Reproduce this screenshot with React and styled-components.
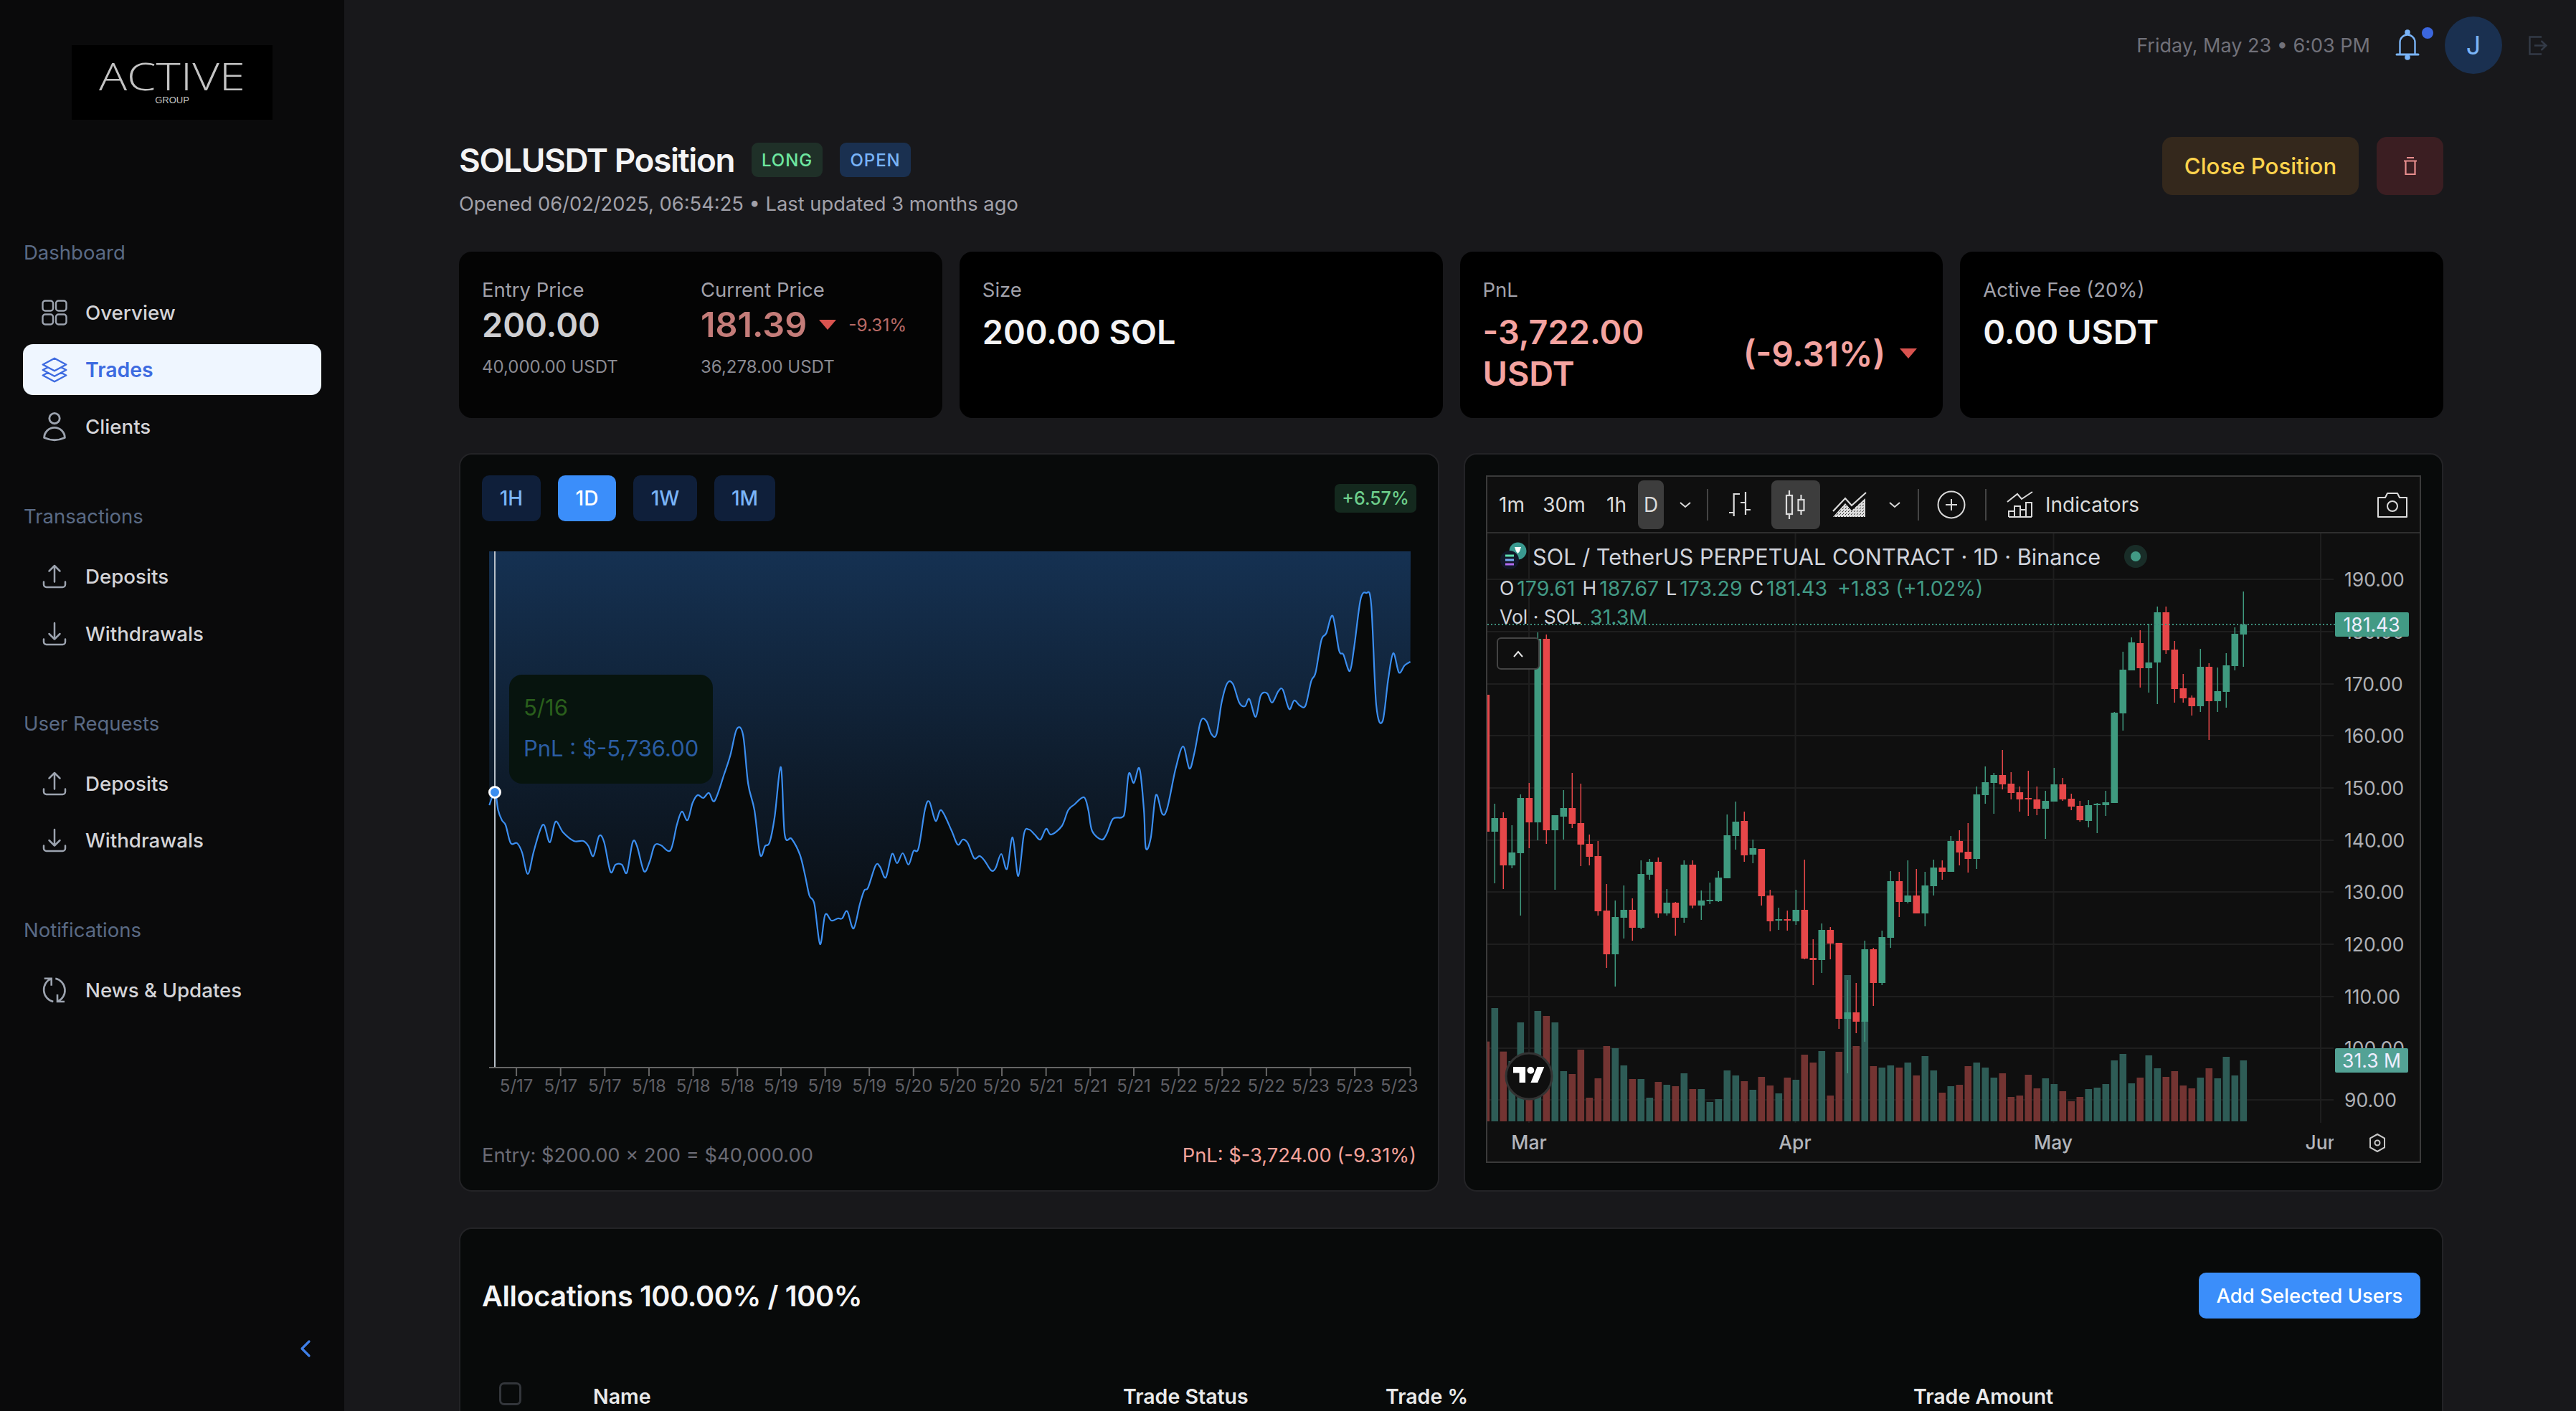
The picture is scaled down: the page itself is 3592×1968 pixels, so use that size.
import React from "react";
import styled, { createGlobalStyle } from "styled-components";
import {
  HiOutlineSquare3Stack3D,
  HiOutlineUser,
  HiOutlineArrowUpTray,
  HiOutlineArrowDownTray,
  HiOutlineChevronLeft,
} from "react-icons/hi2";

const GlobalStyle = createGlobalStyle`
  html, body {
    margin: 0;
    padding: 0;
    width: 3592px;
    height: 1968px;
    overflow: hidden;
    background: #18181b;
    font-family: Inter, "Noto Sans", sans-serif;
  }
`;

const Shell = styled.div`
  display: flex;
  width: 3592px;
  height: 1968px;
  overflow: hidden;
`;

const Sidebar = styled.aside`
  width: 480px;
  flex: none;
  height: 100%;
  background: #0a0a0b;
  display: flex;
  flex-direction: column;
`;

const Logo = styled.div`
  width: 280px;
  height: 104px;
  margin: 63px 0 165px 100px;
  background: #000;
  color: #c4c4c4;
  display: flex;
  flex-direction: column;
  align-items: center;
  font-family: "Liberation Sans", sans-serif;
  font-weight: 400;
`;

const LogoMain = styled.span`
  font-size: 53px;
  line-height: 38px;
  margin-top: 24px;
  font-family: "Open Sans", sans-serif;
  font-weight: 300;
  transform: scaleX(1.23);
`;

const LogoSub = styled.span`
  font-size: 13px;
  line-height: 12px;
  margin-top: 9px;
`;

const NavSection = styled.div`
  display: flex;
  flex-direction: column;
  gap: 8.5px;
  margin-bottom: 69.5px;
`;

const SectionLabel = styled.div`
  color: #5a6a85;
  font-size: 27.5px;
  line-height: 40px;
  padding-left: 33px;
  margin-bottom: 20px;
`;

const NavItem = styled.div`
  width: 416px;
  height: 71px;
  margin-left: 32px;
  padding-left: 26px;
  box-sizing: border-box;
  display: flex;
  align-items: center;
  gap: 26px;
  border-radius: 14px;
  font-size: ${(p) => (p.$active ? 28.4 : 27.7)}px;
  font-weight: ${(p) => (p.$active ? 600 : 500)};
  background: ${(p) => (p.$active ? "#eff6ff" : "transparent")};
  color: ${(p) => (p.$active ? "#3e6be0" : "#d4d4d8")};
`;

const NavIcon = styled.span`
  width: 35px;
  height: 40px;
  display: flex;
  align-items: center;
  justify-content: center;
  color: ${(p) => (p.$active ? "#3e6be0" : "#9ca3af")};
  svg {
    flex: none;
  }
`;

const CollapseButton = styled.div`
  margin-top: auto;
  margin-bottom: 71px;
  align-self: flex-end;
  margin-right: 38px;
  color: #3f7fe8;
  display: flex;
`;

const Main = styled.main`
  flex: 1;
  min-width: 0;
  display: flex;
  flex-direction: column;
`;

const Topbar = styled.header`
  height: 126px;
  flex: none;
  padding-right: 40px;
  display: flex;
  align-items: center;
  justify-content: flex-end;
`;

const DateText = styled.span`
  color: #71717a;
  font-size: 27px;
  margin-right: 34px;
`;

const BellWrap = styled.div`
  position: relative;
  width: 36px;
  height: 44px;
  margin-right: 34px;
  color: #7ab4f8;
  svg {
    display: block;
  }
`;

const BellDot = styled.span`
  position: absolute;
  top: -3px;
  right: -18px;
  width: 16px;
  height: 16px;
  border-radius: 50%;
  background: #3b66dd;
`;

const Avatar = styled.div`
  width: 80px;
  height: 80px;
  border-radius: 50%;
  background: #1a3050;
  color: #7ab4f8;
  font-size: 36px;
  display: flex;
  align-items: center;
  justify-content: center;
`;

const LogoutIcon = styled.div`
  color: #333a47;
  margin-left: 37px;
  display: flex;
`;

const Content = styled.div`
  padding: 65px 185px 0 160px;
`;

const PageHeader = styled.div`
  display: flex;
  justify-content: space-between;
  height: 114px;
  margin-bottom: 46px;
`;

const TitleRow = styled.div`
  display: flex;
  align-items: center;
  height: 64px;
  gap: 24px;
`;

const Title = styled.h1`
  margin: 0;
  color: #f4f4f5;
  font-size: 45.8px;
  font-weight: 600;
  letter-spacing: -0.03em;
`;

const Tag = styled.span`
  height: 48px;
  width: 99px;
  border-radius: 9px;
  display: flex;
  align-items: center;
  justify-content: center;
  font-size: 24px;
  font-weight: 500;
  letter-spacing: 0.04em;
  background: ${(p) => p.$bg};
  color: ${(p) => p.$fg};
`;

const Subtitle = styled.div`
  margin: 10px 0 0;
  color: #a1a1aa;
  font-size: 27.3px;
  line-height: 40px;
`;

const HeaderActions = styled.div`
  display: flex;
  gap: 25px;
  height: 81px;
`;

const ActionButton = styled.button`
  border: 0;
  height: 81px;
  border-radius: 14px;
  font-family: inherit;
  font-size: 31.2px;
  font-weight: 500;
  width: ${(p) => p.$w}px;
  background: ${(p) => p.$bg};
  color: ${(p) => p.$fg};
  display: flex;
  align-items: center;
  justify-content: center;
`;

const StatGrid = styled.div`
  display: grid;
  grid-template-columns: repeat(4, 1fr);
  gap: 24px;
  height: 232px;
  margin-bottom: 49px;
`;

const StatCard = styled.div`
  background: ${(p) => p.$bg || "#000"};
  border-radius: 18px;
  padding: 33px 32px;
  box-sizing: border-box;
`;

const StatSplit = styled.div`
  display: grid;
  grid-template-columns: 305px 1fr;
`;

const StatLabel = styled.div`
  color: #a1a1aa;
  font-size: 27.5px;
  line-height: 40px;
`;

const StatValue = styled.div`
  font-size: ${(p) => p.$size || 46.8}px;
  font-weight: 600;
  line-height: ${(p) => p.$line || 58}px;
  margin-top: ${(p) => p.$top || 0}px;
  color: ${(p) => p.$color || "#f4f4f5"};
`;

const StatSub = styled.div`
  color: #8a8a92;
  font-size: 24px;
  line-height: 36px;
  margin-top: 12px;
`;

const PriceRow = styled.div`
  display: flex;
  align-items: center;
  gap: 17px;
`;

const Triangle = styled.span`
  width: 0;
  height: 0;
  border-left: ${(p) => p.$w}px solid transparent;
  border-right: ${(p) => p.$w}px solid transparent;
  border-top: ${(p) => p.$h}px solid #d9534f;
`;

const SmallDelta = styled.span`
  color: #b86a66;
  font-size: 24.4px;
`;

const PnlRow = styled.div`
  display: flex;
  justify-content: space-between;
  align-items: center;
`;

const PnlDelta = styled.div`
  display: flex;
  align-items: center;
  gap: 20px;
  margin: 12px 4px 0 0;
  color: #f4a3a0;
  font-size: 47.5px;
  font-weight: 600;
`;

const ChartRow = styled.div`
  display: grid;
  grid-template-columns: 1367px 1366px;
  gap: 34px;
  height: 1030px;
  margin-bottom: 50px;
`;

const Panel = styled.section`
  background: #080a0a;
  border: 2px solid #232326;
  border-radius: 18px;
  box-sizing: border-box;
  position: relative;
`;

const RangeBar = styled.div`
  display: flex;
  align-items: center;
  gap: 24px;
  padding: 29px 30px 0;
`;

const RangeButton = styled.div`
  height: 64px;
  width: ${(p) => p.$w}px;
  border-radius: 10px;
  display: flex;
  align-items: center;
  justify-content: center;
  font-size: 28px;
  font-weight: 500;
  background: ${(p) => (p.$active ? "#3b8efa" : "#0f1f3a")};
  color: ${(p) => (p.$active ? "#fff" : "#7ab4f8")};
`;

const ChangeBadge = styled.span`
  margin-left: auto;
  height: 40px;
  width: 114px;
  border-radius: 7px;
  display: flex;
  align-items: center;
  justify-content: center;
  background: #14291e;
  color: #6ecf8c;
  font-size: 25px;
  font-weight: 500;
`;

const PlotWrap = styled.div`
  position: relative;
  height: 800px;
  margin-top: 13px;
  svg {
    display: block;
  }
`;

const ChartTip = styled.div`
  position: absolute;
  left: 68px;
  top: 201px;
  width: 284px;
  height: 152px;
  border-radius: 18px;
  background: #07140e;
  box-sizing: border-box;
  padding: 17px 20px;
  font-size: 31px;
  line-height: 57px;
`;

const TipDate = styled.div`
  color: #2a5f1c;
`;

const TipValue = styled.div`
  color: #2b5da3;
  white-space: nowrap;
`;

const PanelFooter = styled.div`
  display: flex;
  justify-content: space-between;
  padding: 0 30px;
  margin-top: 52px;
  font-size: 27.3px;
  line-height: 40px;
  color: ${(p) => p.$color};
`;

const FooterRight = styled.span`
  color: #f4a29a;
`;

const TvFrame = styled.div`
  margin: 29px 29px 0;
  height: 959px;
  border: 2px solid #3a3a3a;
  box-sizing: border-box;
  background: #0f0f0f;
  display: flex;
  flex-direction: column;
`;

const TvToolbar = styled.div`
  height: 79px;
  flex: none;
  box-sizing: border-box;
  border-bottom: 2px solid #2e2e2e;
  display: flex;
  align-items: center;
  padding: 0 17px 0 4px;
  color: #dbdbdb;
  font-size: 28px;
`;

const TvButton = styled.div`
  width: ${(p) => p.$w}px;
  height: 68px;
  display: flex;
  align-items: center;
  justify-content: center;
  border-radius: 8px;
  flex: none;
  background: ${(p) => (p.$active ? "#3d3d3d" : "transparent")};
`;

const TvDivider = styled.span`
  width: 2px;
  height: 44px;
  flex: none;
  background: #444;
  margin-left: ${(p) => p.$left || 0}px;
`;

const TvIndicators = styled.div`
  display: flex;
  align-items: center;
  gap: 15px;
  margin-left: 27px;
`;

const TvCamera = styled.div`
  margin-left: auto;
  display: flex;
`;

const TvCanvas = styled.div`
  position: relative;
  flex: 1;
  min-height: 0;
  svg {
    display: block;
  }
`;

const TvLegend = styled.div`
  position: absolute;
  left: 17px;
  top: 10px;
  display: flex;
  flex-direction: column;
  color: #d1d4dc;
`;

const LegendTitle = styled.div`
  display: flex;
  align-items: center;
  gap: 8px;
  font-size: 30.7px;
  height: 44px;
`;

const LegendDot = styled.span`
  width: 32px;
  height: 32px;
  margin-left: 25px;
  border-radius: 50%;
  background: rgba(66, 154, 133, 0.22);
  display: flex;
  align-items: center;
  justify-content: center;
  &::after {
    content: "";
    width: 14px;
    height: 14px;
    border-radius: 50%;
    background: #429a85;
  }
`;

const LegendRow = styled.div`
  display: flex;
  align-items: center;
  font-size: 26.5px;
  height: 40px;
  margin-top: ${(p) => p.$top || 0}px;
  gap: ${(p) => p.$gap || 0}px;
`;

const LegendNum = styled.span`
  color: #429a85;
  font-size: 28.5px;
  margin: 0 10px 0 4px;
`;

const FoldButton = styled.div`
  position: absolute;
  left: 13px;
  top: 145px;
  width: 56px;
  height: 41px;
  border: 2px solid #444;
  border-radius: 6px;
  background: #0f0f0f;
  display: flex;
  align-items: center;
  justify-content: center;
`;

const TablePanel = styled(Panel)`
  height: 400px;
  padding: 61px 30px 0;
`;

const TableHead = styled.div`
  display: flex;
  justify-content: space-between;
  align-items: center;
  height: 64px;
`;

const TableTitle = styled.h2`
  margin: 2px 0 0;
  color: #f4f4f5;
  font-size: 39.7px;
  font-weight: 600;
  letter-spacing: -0.01em;
`;

const PrimaryButton = styled.button`
  border: 0;
  border-radius: 10px;
  height: 64px;
  width: 309px;
  background: #3b8efa;
  color: #fff;
  font-family: inherit;
  font-size: 27.5px;
  font-weight: 500;
`;

const TableColumns = styled.div`
  display: grid;
  grid-template-columns: 155px 739px 366px 736px 1fr;
  align-items: center;
  margin-top: 88px;
  height: 40px;
  color: #eaeaea;
  font-size: 28.5px;
  font-weight: 600;
`;

const Checkbox = styled.span`
  width: 31px;
  height: 32px;
  margin-left: 24px;
  box-sizing: border-box;
  border: 3px solid #33363b;
  border-radius: 7px;
  margin-top: -6px;
`;

const OverviewIcon = () => (
  <svg width="36" height="36" viewBox="0 0 36 36" fill="none" stroke="currentColor" strokeWidth="2.4">
    <rect x="1.5" y="1.5" width="14.5" height="14" rx="3.5" />
    <rect x="20" y="1.5" width="14.5" height="14" rx="3.5" />
    <rect x="1.5" y="20.5" width="14.5" height="14" rx="3.5" />
    <rect x="20" y="20.5" width="14.5" height="14" rx="3.5" />
  </svg>
);

const NewsIcon = () => (
  <svg width="40" height="40" viewBox="0 0 40 40" fill="none" stroke="currentColor" strokeWidth="2.6">
    <path d="M15.7 3.7A17 17 0 0 0 18.3 36M5.7 3.7h10v10" />
    <path d="M21.3 3.7A17 17 0 0 1 24 36M24 26v10h10" />
  </svg>
);

const BellIcon = () => (
  <svg width="36" height="44" viewBox="0 0 36 44" fill="none" stroke="currentColor" strokeWidth="2.4">
    <circle cx="18" cy="4" r="2.6" fill="currentColor" />
    <path d="M7.5 34V18a10.5 10.5 0 0 1 21 0v16" />
    <path d="M3 35h30" strokeLinecap="round" strokeWidth="3" />
    <circle cx="18" cy="39" r="2.6" fill="currentColor" />
  </svg>
);

const LogoutGlyph = () => (
  <svg width="26" height="27" viewBox="0 0 26 27" fill="none" stroke="currentColor" strokeWidth="2.4">
    <path d="M18 1.5H1.5v24H18" />
    <path d="M8 13.5h16M17.5 7l7 6.5-7 6.5" />
  </svg>
);

const TrashGlyph = () => (
  <svg width="24" height="28" viewBox="0 0 24 28" fill="none" stroke="#e88e8e" strokeWidth="2.2">
    <path d="M7 2h10M3 6.5h18M5.5 6.5V25h13V6.5" />
  </svg>
);

const LINE = [
  [48, 1123], [57, 1105], [62, 1130], [68, 1144], [74, 1151], [82, 1176], [92, 1176], [100, 1189], [109, 1219],
  [118, 1189], [128, 1159], [135, 1151], [144, 1175], [153, 1146], [165, 1161], [182, 1173], [197, 1173],
  [205, 1180], [213, 1194], [222, 1166], [230, 1175], [240, 1216], [248, 1206], [258, 1206], [266, 1217],
  [275, 1175], [282, 1180], [293, 1215], [302, 1202], [310, 1179], [320, 1179], [335, 1186], [345, 1151],
  [353, 1132], [362, 1144], [370, 1120], [378, 1109], [387, 1113], [396, 1106], [405, 1117], [420, 1080],
  [430, 1053], [440, 1017], [450, 1025], [458, 1093], [468, 1130], [477, 1192], [485, 1180], [492, 1175],
  [500, 1140], [510, 1070], [516, 1164], [527, 1170], [540, 1192], [548, 1220], [555, 1249], [563, 1261],
  [572, 1317], [580, 1276], [590, 1284], [600, 1281], [607, 1281], [615, 1271], [625, 1295], [635, 1261],
  [642, 1242], [648, 1238], [660, 1207], [667, 1209], [676, 1224], [686, 1191], [694, 1204], [703, 1190],
  [712, 1206], [720, 1187], [728, 1183], [738, 1130], [745, 1118], [755, 1145], [764, 1130], [780, 1158],
  [790, 1178], [798, 1171], [806, 1176], [816, 1197], [825, 1194], [833, 1201], [843, 1214], [850, 1211],
  [859, 1191], [868, 1212], [877, 1168], [886, 1222], [895, 1163], [903, 1157], [912, 1164], [921, 1171],
  [930, 1156], [938, 1164], [955, 1152], [965, 1130], [975, 1122], [990, 1112], [997, 1130], [1003, 1159],
  [1018, 1171], [1026, 1163], [1036, 1142], [1050, 1140], [1055, 1130], [1061, 1079], [1069, 1092],
  [1078, 1072], [1085, 1130], [1088, 1183], [1096, 1168], [1104, 1109], [1114, 1135], [1122, 1127],
  [1135, 1073], [1147, 1041], [1157, 1072], [1165, 1050], [1175, 1006], [1184, 1006], [1192, 1024],
  [1200, 1024], [1208, 980], [1217, 953], [1226, 954], [1236, 980], [1245, 985], [1252, 975], [1262, 1000],
  [1270, 970], [1280, 967], [1288, 980], [1298, 964], [1305, 962], [1315, 989], [1323, 977], [1332, 984],
  [1341, 984], [1350, 950], [1357, 938], [1366, 893], [1374, 883], [1384, 859], [1394, 907], [1401, 913],
  [1411, 936], [1418, 903], [1428, 837], [1437, 827], [1445, 843], [1453, 983], [1463, 1006], [1472, 947],
  [1480, 911], [1489, 938], [1498, 928], [1507, 923],
].map(([zx, y]) => [640 + zx / 1.136, y]);

// catmull-rom through the traced points, keeps the curve soft like the original
const smoothPath = (pts) => {
  let d = `M${pts[0][0]} ${pts[0][1]}`;
  for (let i = 0; i < pts.length - 1; i++) {
    const p0 = pts[i - 1] || pts[i];
    const p1 = pts[i];
    const p2 = pts[i + 1];
    const p3 = pts[i + 2] || p2;
    const c1x = p1[0] + (p2[0] - p0[0]) / 6;
    const c1y = p1[1] + (p2[1] - p0[1]) / 6;
    const c2x = p2[0] - (p3[0] - p1[0]) / 6;
    const c2y = p2[1] - (p3[1] - p1[1]) / 6;
    d += `C${c1x.toFixed(1)} ${c1y.toFixed(1)} ${c2x.toFixed(1)} ${c2y.toFixed(1)} ${p2[0].toFixed(1)} ${p2[1]}`;
  }
  return d;
};

const TICKS = [91, 161, 231, 301, 371, 441, 510, 580, 650, 720, 790, 860, 930, 1000, 1069, 1140, 1209, 1279, 1349, 1419, 1507];
const TICK_LABELS = ["5/17", "5/17", "5/17", "5/18", "5/18", "5/18", "5/19", "5/19", "5/19", "5/20", "5/20", "5/20", "5/21", "5/21", "5/21", "5/22", "5/22", "5/22", "5/23", "5/23", "5/23"];

const PnlChart = () => {
  const line = smoothPath(LINE);
  const area = `${line}L1967 769L682 769Z`;
  return (
    <svg width="1363" height="800" viewBox="642 740 1363 800">
      <defs>
        <linearGradient id="pnlFill" gradientUnits="userSpaceOnUse" x1="0" y1="769" x2="0" y2="1317">
          <stop offset="0" stopColor="#153152" />
          <stop offset="1" stopColor="#090c0f" />
        </linearGradient>
      </defs>
      <path d={area} fill="url(#pnlFill)" />
      <path d={line} fill="none" stroke="#3b8ef0" strokeWidth="2.2" />
      <line x1="690" y1="769" x2="690" y2="1489" stroke="#b8c0c8" strokeWidth="2" />
      <line x1="682" y1="1489" x2="1967" y2="1489" stroke="#666" strokeWidth="2" />
      {TICKS.map((t, i) => {
        const x = 640 + t / 1.136;
        const last = i === TICKS.length - 1;
        return (
          <g key={i}>
            <line x1={x} y1="1489" x2={x} y2="1501" stroke="#666" strokeWidth="2" />
            <text x={last ? x + 11 : x} y="1523" textAnchor={last ? "end" : "middle"} fontSize="24" fill="#5f5f65">
              {TICK_LABELS[i]}
            </text>
          </g>
        );
      })}
      <circle cx="690" cy="1105" r="7.5" fill="#3b8ef0" stroke="#fff" strokeWidth="3" />
    </svg>
  );
};

// colour, body top, body bottom, wick top, wick bottom, volume top (from the crop)
const CANDLES = [
  ["r", 969, 1160, 969, 1165, 968], ["g", 1141, 1160, 1121, 1232, 828], ["r", 1141, 1207, 1133, 1240, 1010],
  ["g", 1189, 1207, 1151, 1211, 1050], ["g", 1113, 1190, 1108, 1277, 888], ["r", 1113, 1147, 1092, 1183, 1150],
  ["g", 891, 1147, 882, 1172, 840], ["r", 891, 1158, 885, 1177, 861], ["g", 1137, 1158, 1137, 1241, 888],
  ["g", 1127, 1139, 1102, 1171, 1092], ["r", 1127, 1149, 1078, 1155, 1104], ["r", 1148, 1178, 1093, 1208, 1002],
  ["r", 1177, 1195, 1164, 1207, 1203], ["r", 1194, 1271, 1173, 1277, 1122], ["r", 1270, 1331, 1233, 1350, 987],
  ["g", 1279, 1331, 1256, 1376, 996], ["g", 1269, 1280, 1235, 1309, 1068], ["r", 1269, 1294, 1253, 1312, 1125],
  ["g", 1219, 1294, 1200, 1296, 1125], ["g", 1202, 1220, 1198, 1227, 1203], ["r", 1202, 1274, 1196, 1280, 1137],
  ["g", 1259, 1274, 1240, 1277, 1149], ["r", 1259, 1280, 1258, 1305, 1155], ["g", 1206, 1280, 1200, 1287, 1101],
  ["r", 1206, 1263, 1200, 1267, 1167], ["g", 1256, 1263, 1242, 1283, 1167], ["g", 1255, 1257, 1231, 1261, 1221],
  ["g", 1224, 1257, 1215, 1258, 1209], ["g", 1165, 1225, 1136, 1225, 1089], ["g", 1146, 1166, 1118, 1185, 1110],
  ["r", 1145, 1193, 1132, 1202, 1134], ["g", 1183, 1192, 1171, 1204, 1170], ["r", 1184, 1250, 1184, 1263, 1116],
  ["r", 1249, 1285, 1241, 1299, 1152], ["g", 1282, 1284, 1266, 1297, 1185], ["r", 1282, 1284, 1270, 1298, 1119],
  ["g", 1269, 1285, 1241, 1290, 1128], ["r", 1269, 1337, 1199, 1338, 1023], ["r", 1336, 1339, 1310, 1374, 1056],
  ["g", 1297, 1339, 1288, 1357, 1008], ["r", 1297, 1316, 1293, 1338, 1194], ["r", 1315, 1421, 1315, 1435, 1011],
  ["g", 1412, 1421, 1367, 1497, 690], ["r", 1412, 1425, 1371, 1441, 987], ["g", 1324, 1425, 1312, 1453, 880],
  ["r", 1324, 1371, 1322, 1403, 1071], ["g", 1307, 1371, 1298, 1374, 1077], ["g", 1229, 1308, 1215, 1322, 1068],
  ["r", 1229, 1258, 1216, 1279, 1077], ["g", 1249, 1258, 1200, 1260, 1056], ["r", 1249, 1274, 1212, 1274, 1110],
  ["g", 1235, 1274, 1216, 1292, 1029], ["g", 1210, 1236, 1199, 1249, 1089], ["r", 1210, 1216, 1200, 1227, 1182],
  ["g", 1173, 1216, 1166, 1216, 1155], ["r", 1173, 1189, 1158, 1207, 1149], ["r", 1188, 1198, 1148, 1217, 1071],
  ["g", 1108, 1198, 1097, 1212, 1056], ["g", 1091, 1109, 1069, 1121, 1077], ["g", 1081, 1092, 1078, 1135, 1119],
  ["r", 1081, 1094, 1046, 1101, 1101], ["r", 1093, 1106, 1077, 1115, 1200], ["r", 1105, 1115, 1097, 1132, 1194],
  ["r", 1113, 1115, 1075, 1138, 1107], ["r", 1115, 1128, 1097, 1137, 1164], ["g", 1117, 1128, 1103, 1170, 1122],
  ["g", 1094, 1118, 1071, 1118, 1146], ["r", 1094, 1115, 1085, 1117, 1176], ["r", 1114, 1125, 1107, 1130, 1218],
  ["r", 1124, 1144, 1117, 1146, 1200], ["g", 1123, 1145, 1116, 1154, 1167], ["g", 1121, 1123, 1120, 1162, 1161],
  ["g", 1119, 1123, 1103, 1138, 1146], ["g", 994, 1120, 993, 1120, 1047], ["g", 934, 995, 909, 1019, 1020],
  ["g", 896, 935, 889, 935, 1143], ["r", 897, 932, 879, 959, 1119], ["g", 924, 932, 870, 966, 1026],
  ["g", 854, 924, 846, 982, 1080], ["r", 854, 907, 846, 912, 1116], ["r", 906, 961, 894, 980, 1092],
  ["r", 960, 974, 940, 980, 1152], ["r", 973, 985, 970, 998, 1164], ["g", 930, 985, 905, 993, 1119],
  ["r", 930, 978, 925, 1032, 1080], ["g", 964, 978, 931, 993, 1122], ["g", 928, 965, 911, 987, 1032],
  ["g", 884, 929, 875, 935, 1110], ["g", 871, 885, 825, 930, 1047],
];

const GREEN = "#3f9a7f";
const RED = "#e64749";
const PRICES = [
  ["190.00", 808], ["170.00", 954], ["160.00", 1026], ["150.00", 1099], ["140.00", 1172],
  ["130.00", 1244], ["120.00", 1317], ["110.00", 1390], ["90.00", 1534],
];
const H_LINES = [808, 881, 954, 1026, 1099, 1172, 1244, 1317, 1390, 1462, 1534];
const V_LINES = [2132, 2503.5, 2863.5, 3236];
const MONTHS = [["Mar", 2132], ["Apr", 2503], ["May", 2863]];

const CandleChart = () => (
  <svg width="1299" height="876" viewBox="2074 744 1299 876" fontFamily="Inter, sans-serif">
    <defs>
      <clipPath id="plotClip">
        <rect x="2074" y="744" width="1180" height="876" />
      </clipPath>
    </defs>
    {H_LINES.map((y) => (
      <line key={y} x1="2074" x2="3254" y1={y} y2={y} stroke="#1e1e1e" strokeWidth="2" />
    ))}
    {V_LINES.map((x) => (
      <line key={x} x1={x} x2={x} y1="744" y2="1566" stroke="#1e1e1e" strokeWidth="2" />
    ))}
    <g clipPath="url(#plotClip)">
      {CANDLES.map((c, i) => {
        const x = 2072.3 + i * 12;
        const top = 1130 + c[5] / 3;
        return (
          <rect key={i} x={x - 4.8} y={top} width="9.6" height={1564 - top} fill={c[0] === "g" ? "#2e5c56" : "#733432"} />
        );
      })}
      {CANDLES.map((c, i) => {
        const x = 2072.3 + i * 12;
        const col = c[0] === "g" ? GREEN : RED;
        return (
          <g key={i}>
            <rect x={x - 0.75} y={c[3]} width="1.5" height={c[4] - c[3]} fill={col} />
            <rect x={x - 4.8} y={c[1]} width="9.6" height={Math.max(c[2] - c[1], 2)} fill={col} />
          </g>
        );
      })}
    </g>
    <line x1="2074" x2="3256" y1="871" y2="871" stroke="#3d8f7c" strokeWidth="2" strokeDasharray="2 3" />
    <circle cx="2132" cy="1501" r="32" fill="#0f0f0f" stroke="#333" strokeWidth="3" />
    <g transform="translate(2110 1488) scale(1.22)" fill="#fff">
      <path d="M14 22H7V11H0V4h14v18zM28 22h-8l7.5-18h8L28 22z" transform="translate(0 -4)" />
      <circle cx="20" cy="4" r="4" />
    </g>
    {PRICES.map(([label, y]) => (
      <text key={label} x="3269" y={y + 10} fontSize="26.5" fill="#aeb0b5">
        {label}
      </text>
    ))}
    <text x="3269" y="1472" fontSize="26.5" fill="#aeb0b5">
      100.00
    </text>
    <text x="3269" y="891" fontSize="26.5" fill="#aeb0b5">
      180.00
    </text>
    <rect x="3256" y="854" width="103" height="34" rx="2" fill="#429a85" />
    <text x="3307" y="881" fontSize="26.5" fill="#eef" textAnchor="middle">
      181.43
    </text>
    <rect x="3256" y="1462" width="102" height="34" rx="2" fill="#53a295" />
    <text x="3307" y="1489" fontSize="26.5" fill="#eef" textAnchor="middle">
      31.3 M
    </text>
    {MONTHS.map(([m, x]) => (
      <text key={m} x={x} y="1603" fontSize="26.5" fontWeight="500" fill="#b2b5bb" textAnchor="middle">
        {m}
      </text>
    ))}
    <svg x="3100" y="1570" width="154" height="50" viewBox="0 0 154 50">
      <text x="138" y="33" fontSize="26.5" fontWeight="500" fill="#b2b5bb" textAnchor="middle">
        Jun
      </text>
    </svg>
    <path d="M3315 1582l10 5.5v13l-10 5.5-10-5.5v-13z" fill="none" stroke="#c8c8c8" strokeWidth="2" />
    <circle cx="3315" cy="1594" r="3.5" fill="none" stroke="#c8c8c8" strokeWidth="2" />
  </svg>
);

const CaretDown = () => (
  <svg width="16" height="10" viewBox="0 0 16 10" fill="none" stroke="#dbdbdb" strokeWidth="2">
    <path d="M1 2l7 6 7-6" />
  </svg>
);

const SolIcon = () => (
  <svg width="38" height="44" viewBox="0 0 38 44" style={{ flex: "none" }}>
    <circle cx="25.5" cy="14.5" r="12" fill="#3a9a90" />
    <path d="M21 9h9l-2 6-2.5 3-2.5-3z" fill="#fff" />
    <circle cx="14" cy="27" r="13" fill="#12182a" />
    <rect x="8" y="19.5" width="12" height="3" fill="#5ee0b0" />
    <rect x="8" y="25.5" width="12" height="3" fill="#7aa8f0" />
    <rect x="8" y="31.5" width="12" height="3" fill="#b06af0" />
  </svg>
);

const NAV = [
  {
    title: "Dashboard",
    items: [
      { label: "Overview", icon: <OverviewIcon /> },
      { label: "Trades", icon: <HiOutlineSquare3Stack3D size={40} />, active: true },
      { label: "Clients", icon: <HiOutlineUser size={46} /> },
    ],
  },
  {
    title: "Transactions",
    items: [
      { label: "Deposits", icon: <HiOutlineArrowUpTray size={40} /> },
      { label: "Withdrawals", icon: <HiOutlineArrowDownTray size={40} /> },
    ],
  },
  {
    title: "User Requests",
    items: [
      { label: "Deposits", icon: <HiOutlineArrowUpTray size={40} /> },
      { label: "Withdrawals", icon: <HiOutlineArrowDownTray size={40} /> },
    ],
  },
  {
    title: "Notifications",
    items: [{ label: "News & Updates", icon: <NewsIcon /> }],
  },
];

const App = () => {
  return (
    <Shell>
      <GlobalStyle />
      <Sidebar>
        <Logo>
          <LogoMain>ACTIVE</LogoMain>
          <LogoSub>GROUP</LogoSub>
        </Logo>
        {NAV.map((section) => (
          <NavSection key={section.title}>
            <SectionLabel>{section.title}</SectionLabel>
            {section.items.map((item) => (
              <NavItem key={item.label} $active={item.active}>
                <NavIcon $active={item.active}>{item.icon}</NavIcon>
                {item.label}
              </NavItem>
            ))}
          </NavSection>
        ))}
        <CollapseButton>
          <HiOutlineChevronLeft size={32} strokeWidth={2.4} />
        </CollapseButton>
      </Sidebar>
      <Main>
        <Topbar>
          <DateText>Friday, May 23 • 6:03 PM</DateText>
          <BellWrap>
            <BellIcon />
            <BellDot />
          </BellWrap>
          <Avatar>J</Avatar>
          <LogoutIcon>
            <LogoutGlyph />
          </LogoutIcon>
        </Topbar>
        <Content>
          <PageHeader>
            <div>
              <TitleRow>
                <Title>SOLUSDT Position</Title>
                <Tag $bg="#1f3028" $fg="#6ee7a0">LONG</Tag>
                <Tag $bg="#1a3050" $fg="#7ab4f8">OPEN</Tag>
              </TitleRow>
              <Subtitle>Opened 06/02/2025, 06:54:25 • Last updated 3 months ago</Subtitle>
            </div>
            <HeaderActions>
              <ActionButton $w={274} $bg="#34281c" $fg="#fdd34d">Close Position</ActionButton>
              <ActionButton $w={93} $bg="#3b1e22">
                <TrashGlyph />
              </ActionButton>
            </HeaderActions>
          </PageHeader>
          <StatGrid>
            <StatCard $bg="#040404">
              <StatSplit>
                <div>
                  <StatLabel>Entry Price</StatLabel>
                  <StatValue $color="#cfcfd2">200.00</StatValue>
                  <StatSub>40,000.00 USDT</StatSub>
                </div>
                <div>
                  <StatLabel>Current Price</StatLabel>
                  <PriceRow>
                    <StatValue $color="#c47c79" $size={48.5}>181.39</StatValue>
                    <Triangle $w={12} $h={14} />
                    <SmallDelta>-9.31%</SmallDelta>
                  </PriceRow>
                  <StatSub>36,278.00 USDT</StatSub>
                </div>
              </StatSplit>
            </StatCard>
            <StatCard>
              <StatLabel>Size</StatLabel>
              <StatValue $top={10}>200.00 SOL</StatValue>
            </StatCard>
            <StatCard>
              <StatLabel>PnL</StatLabel>
              <PnlRow>
                <StatValue $top={10} $color="#f4a3a0">
                  -3,722.00
                  <br />
                  USDT
                </StatValue>
                <PnlDelta>
                  (-9.31%)
                  <Triangle $w={12} $h={14} />
                </PnlDelta>
              </PnlRow>
            </StatCard>
            <StatCard>
              <StatLabel>Active Fee (20%)</StatLabel>
              <StatValue $top={10}>0.00 USDT</StatValue>
            </StatCard>
          </StatGrid>
          <ChartRow>
            <Panel>
              <RangeBar>
                <RangeButton $w={82}>1H</RangeButton>
                <RangeButton $w={81} $active>1D</RangeButton>
                <RangeButton $w={89}>1W</RangeButton>
                <RangeButton $w={85}>1M</RangeButton>
                <ChangeBadge>+6.57%</ChangeBadge>
              </RangeBar>
              <PlotWrap>
                <PnlChart />
                <ChartTip>
                  <TipDate>5/16</TipDate>
                  <TipValue>PnL : $-5,736.00</TipValue>
                </ChartTip>
              </PlotWrap>
              <PanelFooter $color="#6b6b75">
                <span>Entry: $200.00 × 200 = $40,000.00</span>
                <FooterRight>PnL: $-3,724.00 (-9.31%)</FooterRight>
              </PanelFooter>
            </Panel>
            <Panel>
              <TvFrame>
                <TvToolbar>
                  <TvButton $w={60}>1m</TvButton>
                  <TvButton $w={86}>30m</TvButton>
                  <TvButton $w={60}>1h</TvButton>
                  <TvButton $w={36} $active>D</TvButton>
                  <TvButton $w={60}><CaretDown /></TvButton>
                  <TvDivider />
                  <TvButton $w={88}>
                    <svg width="38" height="42" viewBox="0 0 38 42" fill="none" stroke="#dbdbdb" strokeWidth="2.2">
                      <path d="M10.7 5v32M10.7 6H19M4 32h6.7M27 3v32M20 18h7M27 28h7" />
                    </svg>
                  </TvButton>
                  <TvButton $w={68} $active>
                    <svg width="36" height="46" viewBox="0 0 36 46" fill="none" stroke="#dbdbdb" strokeWidth="2.2">
                      <path d="M9 3v7M9 36v7M25.5 9v7M25.5 31v6" />
                      <rect x="5" y="10" width="8" height="26" />
                      <rect x="21.5" y="16" width="8" height="15" />
                    </svg>
                  </TvButton>
                  <TvButton $w={82}>
                    <svg width="50" height="38" viewBox="0 0 50 38" fill="none" stroke="#dbdbdb" strokeWidth="2.2">
                      <defs>
                        <pattern id="hatch" width="4" height="4" patternUnits="userSpaceOnUse">
                          <rect width="2" height="2" fill="#dbdbdb" />
                          <rect x="2" y="2" width="2" height="2" fill="#dbdbdb" />
                        </pattern>
                      </defs>
                      <path d="M2 36l17-19 9 10 19-17v26z" fill="url(#hatch)" stroke="none" />
                      <path d="M2 28l17-18 9 10L48 2" />
                    </svg>
                  </TvButton>
                  <TvButton $w={44}><CaretDown /></TvButton>
                  <TvDivider $left={10} />
                  <TvButton $w={90}>
                    <svg width="40" height="40" viewBox="0 0 40 40" fill="none" stroke="#dbdbdb" strokeWidth="2">
                      <circle cx="20" cy="20" r="18.5" />
                      <path d="M20 12v16M12 20h16" />
                    </svg>
                  </TvButton>
                  <TvDivider $left={2} />
                  <TvIndicators>
                    <svg width="40" height="40" viewBox="0 0 40 40" fill="none" stroke="#dbdbdb" strokeWidth="2">
                      <path d="M2 16L16 5l6 7L37 2" />
                      <path d="M4 37v-8h8v8M12 37V22h8v15M20 37V27h8v10M28 37V17h8v20M4 37h32" />
                    </svg>
                    Indicators
                  </TvIndicators>
                  <TvCamera>
                    <svg width="42" height="36" viewBox="0 0 42 36" fill="none" stroke="#dbdbdb" strokeWidth="2">
                      <path d="M1 8h10l3-6h14l3 6h10v27H1z" strokeLinejoin="round" />
                      <circle cx="21" cy="20" r="7" />
                    </svg>
                  </TvCamera>
                </TvToolbar>
                <TvCanvas>
                  <CandleChart />
                  <TvLegend>
                    <LegendTitle>
                      <SolIcon />
                      SOL / TetherUS PERPETUAL CONTRACT · 1D · Binance
                      <LegendDot />
                    </LegendTitle>
                    <LegendRow $top={2}>
                      O<LegendNum>179.61</LegendNum>
                      H<LegendNum>187.67</LegendNum>
                      L<LegendNum>173.29</LegendNum>
                      C<LegendNum>181.43</LegendNum>
                      <LegendNum>+1.83 (+1.02%)</LegendNum>
                    </LegendRow>
                    <LegendRow $gap={8}>
                      Vol · SOL <LegendNum>31.3M</LegendNum>
                    </LegendRow>
                  </TvLegend>
                  <FoldButton>
                    <svg width="18" height="12" viewBox="0 0 18 12" fill="none" stroke="#e5e5e5" strokeWidth="2">
                      <path d="M3 10l6-7 6 7" />
                    </svg>
                  </FoldButton>
                </TvCanvas>
              </TvFrame>
            </Panel>
          </ChartRow>
          <TablePanel>
            <TableHead>
              <TableTitle>Allocations 100.00% / 100%</TableTitle>
              <PrimaryButton>Add Selected Users</PrimaryButton>
            </TableHead>
            <TableColumns>
              <Checkbox />
              <span>Name</span>
              <span>Trade Status</span>
              <span>Trade %</span>
              <span>Trade Amount</span>
            </TableColumns>
          </TablePanel>
        </Content>
      </Main>
    </Shell>
  );
};

export default App;
